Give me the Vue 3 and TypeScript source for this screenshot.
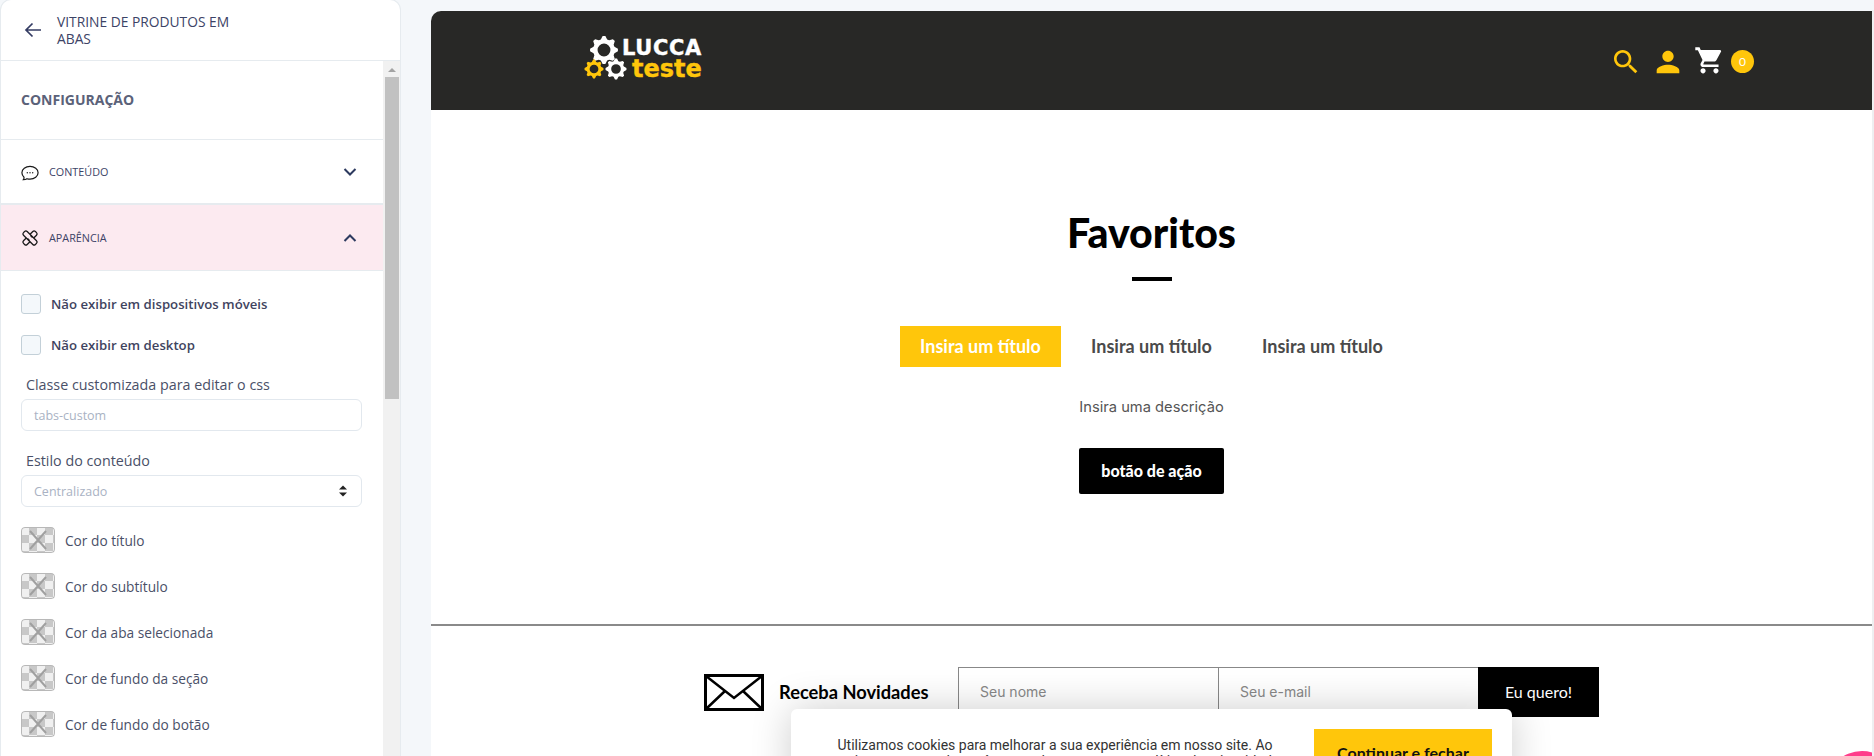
<template>
  <div class="page">
    <aside class="sidebar">
      <div class="side-head">
        <svg class="back" viewBox="0 0 18 18" width="18" height="18"><path d="M17 9H2M8.500 2.500 2 9l6.500 6.500" fill="none" stroke="#343c63" stroke-width="1.700" /></svg>
        <div class="side-title">VITRINE DE PRODUTOS EM ABAS</div>
      </div>
      <div class="side-body">
        <div class="side-scroll">
          <div class="config">CONFIGURAÇÃO</div>
          <div class="acc">
            <svg class="acc-ico" viewBox="0 0 18 18" width="18" height="18">
              <path d="M3 14.200C1.700 13 .9 11.500 .9 9.800.9 6.300 4.500 3.400 9 3.400s8.100 2.900 8.100 6.400-3.600 6.400-8.100 6.400c-1.100 0-2.100-.2-3-.5-.9.600-2.200 1-3.600 1 .5-.6.8-1.400.6-2.500z" fill="none" stroke="#1a1a1a" stroke-width="1.200" />
              <circle cx="6.300" cy="9.800" r=".7" fill="#1a1a1a" /><circle cx="9" cy="9.800" r=".7" fill="#1a1a1a" /><circle cx="11.700" cy="9.800" r=".7" fill="#1a1a1a" />
            </svg>
            <span>CONTEÚDO</span>
            <svg class="chev" viewBox="0 0 14 10" width="14" height="10"><path d="M1.500 2 7 7.500 12.500 2" fill="none" stroke="#2d3a5f" stroke-width="2" /></svg>
          </div>
          <div class="acc open">
            <svg class="acc-ico" viewBox="0 0 18 18" width="18" height="18">
              <g fill="none" stroke="#1a1a1a" stroke-width="1.300" stroke-linejoin="round">
                <rect x="-2.600" y="-8.400" width="5.200" height="16.800" rx="1.800" transform="translate(9 9) rotate(45)" />
                <rect x="-2.600" y="-8.400" width="5.200" height="16.800" rx="1.800" fill="#fceaf0" transform="translate(9 9) rotate(-45)" />
                <path d="M6.500 9.500 8.500 11.500M9.500 6.500 11.500 8.500" />
              </g>
            </svg>
            <span>APARÊNCIA</span>
            <svg class="chev" viewBox="0 0 14 10" width="14" height="10"><path d="M1.500 8 7 2.500 12.500 8" fill="none" stroke="#2d3a5f" stroke-width="2" /></svg>
          </div>
          <div class="form">
            <label class="check"><span class="box"></span>Não exibir em dispositivos móveis</label>
            <label class="check second"><span class="box"></span>Não exibir em desktop</label>
            <div class="field-label">Classe customizada para editar o css</div>
            <div class="input">tabs-custom</div>
            <div class="field-label next">Estilo do conteúdo</div>
            <div class="input select">
              Centralizado
              <svg viewBox="0 0 8 12" width="8" height="12"><path d="M4 .5 8 4.500H0zM4 11.500 0 7.500h8z" fill="#222" /></svg>
            </div>
            <div class="colors">
              <div v-for="c in colors" :key="c" class="color-row">
                <span class="swatch">
                  <svg viewBox="0 0 34 26" width="34" height="26"><path d="M9 4l16 18M25 4 9 22" stroke="#a0a0a0" stroke-width="2" /></svg>
                </span>
                {{ c }}
              </div>
            </div>
          </div>
        </div>
        <div class="scrollbar">
          <div class="arrow"></div>
          <div class="thumb"></div>
        </div>
      </div>
    </aside>

    <main class="preview">
      <header class="top">
        <div class="logo">
          <svg class="gears" viewBox="0 0 37 44" width="37" height="44">
            <path v-for="g in gears" :key="g.cx" :d="gearPath(g.cx, g.cy, g.r, g.teeth)" :fill="g.color" fill-rule="evenodd" />
          </svg>
          <div class="logo-text">
            <div class="lucca">LUCCA</div>
            <div class="teste">teste</div>
          </div>
        </div>
        <div class="actions">
          <svg viewBox="0 0 24 24" width="32" height="32" fill="#ffc60b"><path d="M15.500 14h-.79l-.28-.27C15.410 12.590 16 11.110 16 9.500 16 5.910 13.090 3 9.500 3S3 5.910 3 9.500 5.910 16 9.500 16c1.610 0 3.090-.59 4.230-1.570l.27.28v.79l5 4.990L20.490 19l-4.990-5zm-6 0C7.010 14 5 11.990 5 9.500S7.010 5 9.500 5 14 7.010 14 9.500 11.990 14 9.500 14z" /></svg>
          <svg class="user" viewBox="0 0 24 24" width="34" height="34" fill="#ffc60b"><path d="M12 12c2.210 0 4-1.790 4-4s-1.790-4-4-4-4 1.790-4 4 1.790 4 4 4zm0 2c-2.670 0-8 1.340-8 4v2h16v-2c0-2.660-5.330-4-8-4z" /></svg>
          <svg class="cart" viewBox="0 0 24 24" width="31" height="31" fill="#fff"><path d="M7 18c-1.100 0-1.990.9-1.990 2S5.900 22 7 22s2-.9 2-2-.9-2-2-2zM1 2v2h2l3.600 7.590-1.350 2.450c-.16.28-.25.61-.25.96 0 1.100.9 2 2 2h12v-2H7.420c-.14 0-.25-.11-.25-.25l.03-.12.9-1.830h7.450c.75 0 1.410-.41 1.750-1.030l3.580-6.490c.08-.14.12-.31.12-.48 0-.55-.45-1-1-1H5.210l-.94-2H1zm16 16c-1.100 0-1.990.9-1.990 2s.89 2 1.990 2 2-.9 2-2-.9-2-2-2z" /></svg>
          <span class="badge">0</span>
        </div>
      </header>

      <section class="showcase">
        <h1>Favoritos</h1>
        <div class="rule"></div>
        <div class="tabs">
          <div v-for="(t, i) in tabs" :key="i" class="tab" :class="{ active: i === 0 }">{{ t }}</div>
        </div>
        <p class="desc">Insira uma descrição</p>
        <div class="cta">botão de ação</div>
      </section>

      <section class="news">
        <svg class="mail" viewBox="0 0 60 37" width="60" height="37">
          <rect x="1.500" y="1.500" width="57" height="34" fill="#fff" stroke="#000" stroke-width="3" />
          <path d="M2 2 30 24 58 2M2 35 21 17M58 35 39 17" fill="none" stroke="#000" stroke-width="2.500" />
        </svg>
        <div class="news-title">Receba Novidades</div>
        <div class="news-input">Seu nome</div>
        <div class="news-input">Seu e-mail</div>
        <div class="news-btn">Eu quero!</div>
      </section>

      <div class="cookie">
        <p>Utilizamos cookies para melhorar a sua experiência em nosso site. Ao continuar navegando você concorda com a nossa política de privacidade.</p>
        <div class="cookie-btn">Continuar e fechar</div>
      </div>
      <div class="fab"></div>
    </main>
    <div class="edge"></div>
  </div>
</template>

<script setup lang="ts">
const colors = [
  'Cor do título',
  'Cor do subtítulo',
  'Cor da aba selecionada',
  'Cor de fundo da seção',
  'Cor de fundo do botão'
]
const tabs = ['Insira um título', 'Insira um título', 'Insira um título']

const gears = [
  { cx: 19, cy: 14, r: 14, teeth: 8, color: '#fff' },
  { cx: 9, cy: 33, r: 9.500, teeth: 8, color: '#ffc60b' },
  { cx: 31, cy: 33, r: 10.500, teeth: 8, color: '#fff' }
]

// teeth outline plus a round hole in the middle
const gearPath = (cx: number, cy: number, r: number, teeth: number) => {
  const pts: string[] = []
  const step = (Math.PI * 2) / (teeth * 4)
  for (let i = 0; i < teeth * 4; i++) {
    const rad = i % 4 < 2 ? r : r * 0.78
    const a = i * step - step / 2
    pts.push(`${(cx + Math.cos(a) * rad).toFixed(2)} ${(cy + Math.sin(a) * rad).toFixed(2)}`)
  }
  const h = r * 0.46
  return `M${pts.join('L')}Z M${cx - h} ${cy}a${h} ${h} 0 1 0 ${h * 2} 0a${h} ${h} 0 1 0 ${-h * 2} 0Z`
}
</script>

<style scoped>
.page {
  display: flex;
  width: 1874px;
  height: 756px;
  overflow: hidden;
  background: #f4f7fa;
  font-family: "Open Sans", sans-serif;
}

.sidebar {
  width: 399px;
  height: 756px;
  margin-left: 1px;
  flex-shrink: 0;
  display: flex;
  flex-direction: column;
  background: #fff;
  border-radius: 10px 10px 0 0;
  box-shadow: 0 0 0 1px #e6ebef;
}

.side-head {
  height: 61px;
  display: flex;
  align-items: center;
  padding-left: 23px;
  box-sizing: border-box;
  border-bottom: 1px solid #e6ebef;
}

.side-title {
  width: 200px;
  margin-left: 15px;
  font-size: 13.800px;
  line-height: 17px;
  color: #3c4366;
}

.side-body {
  flex: 1;
  display: flex;
  min-height: 0;
}

.side-scroll {
  flex: 1;
  min-width: 0;
}

.config {
  height: 79px;
  box-sizing: border-box;
  padding: 29px 0 0 20px;
  font-size: 14px;
  line-height: 19px;
  font-weight: 700;
  color: #5b6279;
  border-bottom: 1px solid #e6ebef;
}

.acc {
  height: 65px;
  display: flex;
  align-items: center;
  box-sizing: border-box;
  padding: 0 25px 0 20px;
  font-size: 10.800px;
  color: #3c4366;
  border-bottom: 2px solid #e6ebef;
}

.acc.open {
  height: 66px;
  background: #fceaf0;
  border-bottom: 1px solid #e6ebef;
}

.acc-ico {
  margin-right: 10px;
}

.chev {
  margin-left: auto;
  margin-right: 1px;
}

.form {
  padding: 23px 20px 0;
}

.check {
  display: flex;
  align-items: center;
  height: 20px;
  font-size: 13.200px;
  font-weight: 600;
  color: #3f4460;
}

.check.second {
  margin-top: 21px;
}

.box {
  width: 18px;
  height: 18px;
  margin-right: 10px;
  border: 1px solid #c3d0d8;
  border-radius: 3px;
  background: #f4f8fb;
}

.field-label {
  margin: 21px 0 5px 5px;
  font-size: 14.300px;
  line-height: 18px;
  color: #4a5068;
}

.field-label.next {
  margin-top: 21px;
}

.input {
  display: flex;
  align-items: center;
  justify-content: space-between;
  height: 32px;
  width: 341px;
  box-sizing: border-box;
  padding: 0 14px 0 12px;
  border: 1px solid #e2e8ee;
  border-radius: 6px;
  font-size: 12.500px;
  color: #a9b2c3;
}

.colors {
  margin-top: 20px;
}

.color-row {
  display: flex;
  align-items: center;
  height: 26px;
  margin-bottom: 20px;
  font-size: 13.700px;
  color: #4a5068;
}

.swatch {
  display: block;
  width: 34px;
  height: 26px;
  margin-right: 10px;
  border-radius: 4px;
  background-color: #fff;
  background-image: conic-gradient(#c8c8c8 25%, #f0f0f0 0 50%, #c8c8c8 0 75%, #f0f0f0 0);
  background-size: 16px 16px;
  box-shadow: inset 0 0 0 1px #b8b8b8;
}

.swatch svg {
  display: block;
}

.scrollbar {
  width: 17px;
  background: #f1f1f1;
  flex-shrink: 0;
}

.arrow {
  width: 0;
  height: 0;
  margin: 7px auto 5px;
  border-left: 4px solid transparent;
  border-right: 4px solid transparent;
  border-bottom: 4px solid #a3a3a3;
}

.thumb {
  width: 14px;
  height: 322px;
  margin: 0 auto;
  background: #c1c1c1;
}

.preview {
  position: relative;
  width: 1441px;
  height: 745px;
  margin: 11px 0 0 31px;
  flex-shrink: 0;
  overflow: hidden;
  background: #fff;
  border-radius: 10px 0 0 0;
  font-family: Lato, sans-serif;
}

.edge {
  width: 2px;
  margin-top: 10px;
  background: #eeeff1;
}

.top {
  height: 99px;
  display: flex;
  align-items: center;
  justify-content: space-between;
  padding: 0 118px 0 154px;
  background: #282826;
}

.logo {
  display: flex;
  align-items: center;
  margin-bottom: 5px;
}

.gears {
  overflow: visible;
}

.logo-text {
  font-family: "DejaVu Sans", sans-serif;
  font-weight: 700;
  line-height: 1;
}

.lucca {
  color: #fff;
  font-size: 21px;
  line-height: 21px;
  letter-spacing: .6px;
  -webkit-text-stroke: .4px #fff;
}

.teste {
  margin-left: 10px;
  color: #ffc60b;
  font-size: 24px;
  line-height: 20px;
  -webkit-text-stroke: .4px #ffc60b;
}

.actions {
  display: flex;
  align-items: center;
  padding-top: 2px;
}

.user {
  margin-left: 9px;
}

.cart {
  margin-left: 9px;
  margin-bottom: 2px;
}

.badge {
  width: 23px;
  height: 23px;
  margin-left: 6px;
  border-radius: 50%;
  background: #ffc60b;
  color: #fff;
  font-size: 12px;
  line-height: 23px;
  text-align: center;
}

.showcase {
  height: 516px;
  box-sizing: border-box;
  padding-top: 100px;
  display: flex;
  flex-direction: column;
  align-items: center;
  border-bottom: 2px solid #8a8a8a;
}

h1 {
  margin: 0;
  font-size: 41px;
  line-height: 46px;
  font-weight: 900;
  color: #000;
}

.rule {
  width: 40px;
  height: 4px;
  margin-top: 21px;
  background: #000;
}

.tabs {
  display: flex;
  gap: 10px;
  margin-top: 45px;
}

.tab {
  width: 161px;
  height: 41px;
  font-size: 18px;
  font-weight: 700;
  line-height: 41px;
  text-align: center;
  color: #4a4a4a;
}

.tab.active {
  background: #ffc60b;
  color: #fff;
}

.desc {
  margin: 30px 0 0;
  font-family: Inter, sans-serif;
  font-size: 14.700px;
  line-height: 20px;
  color: #555;
}

.cta {
  width: 145px;
  height: 46px;
  margin-top: 31px;
  border-radius: 2px;
  background: #000;
  color: #fff;
  font-size: 16px;
  font-weight: 900;
  line-height: 45px;
  text-align: center;
}

.news {
  display: flex;
  padding: 41px 0 0 273px;
}

.mail {
  margin: 7px 15px 0 0;
}

.news-title {
  width: 179px;
  padding-top: 13px;
  font-size: 18.300px;
  line-height: 24px;
  font-weight: 700;
  color: #000;
}

.news-input {
  width: 260px;
  height: 50px;
  box-sizing: border-box;
  padding-left: 21px;
  border-left: 1px solid #888;
  border-top: 1px solid #888;
  font-family: Inter, sans-serif;
  font-size: 14px;
  line-height: 48px;
  color: #888;
}

.news-btn {
  width: 121px;
  height: 50px;
  background: #000;
  color: #fff;
  font-size: 16px;
  line-height: 50px;
  text-align: center;
}

.cookie {
  position: absolute;
  left: 360px;
  top: 698px;
  width: 721px;
  height: 80px;
  box-sizing: border-box;
  display: flex;
  padding: 20px 20px 0 34px;
  gap: 29px;
  background: #fff;
  border-radius: 6px;
  box-shadow: 0 0 40px rgba(0, 0, 0, .2);
}

.cookie p {
  width: 460px;
  margin: 8px 0 0;
  font-family: Roboto, sans-serif;
  font-size: 14px;
  line-height: 16px;
  text-align: center;
  color: #333;
}

.cookie-btn {
  width: 178px;
  height: 50px;
  background: #ffc60b;
  color: #111;
  font-size: 16px;
  font-weight: 700;
  line-height: 48px;
  text-align: center;
}

.fab {
  position: absolute;
  right: -26px;
  top: 740px;
  width: 72px;
  height: 72px;
  border-radius: 50%;
  background: #ff3d8b;
}
</style>

<style>
html, body {
  margin: 0;
  overflow: hidden;
  background: #f4f7fa;
}
</style>
